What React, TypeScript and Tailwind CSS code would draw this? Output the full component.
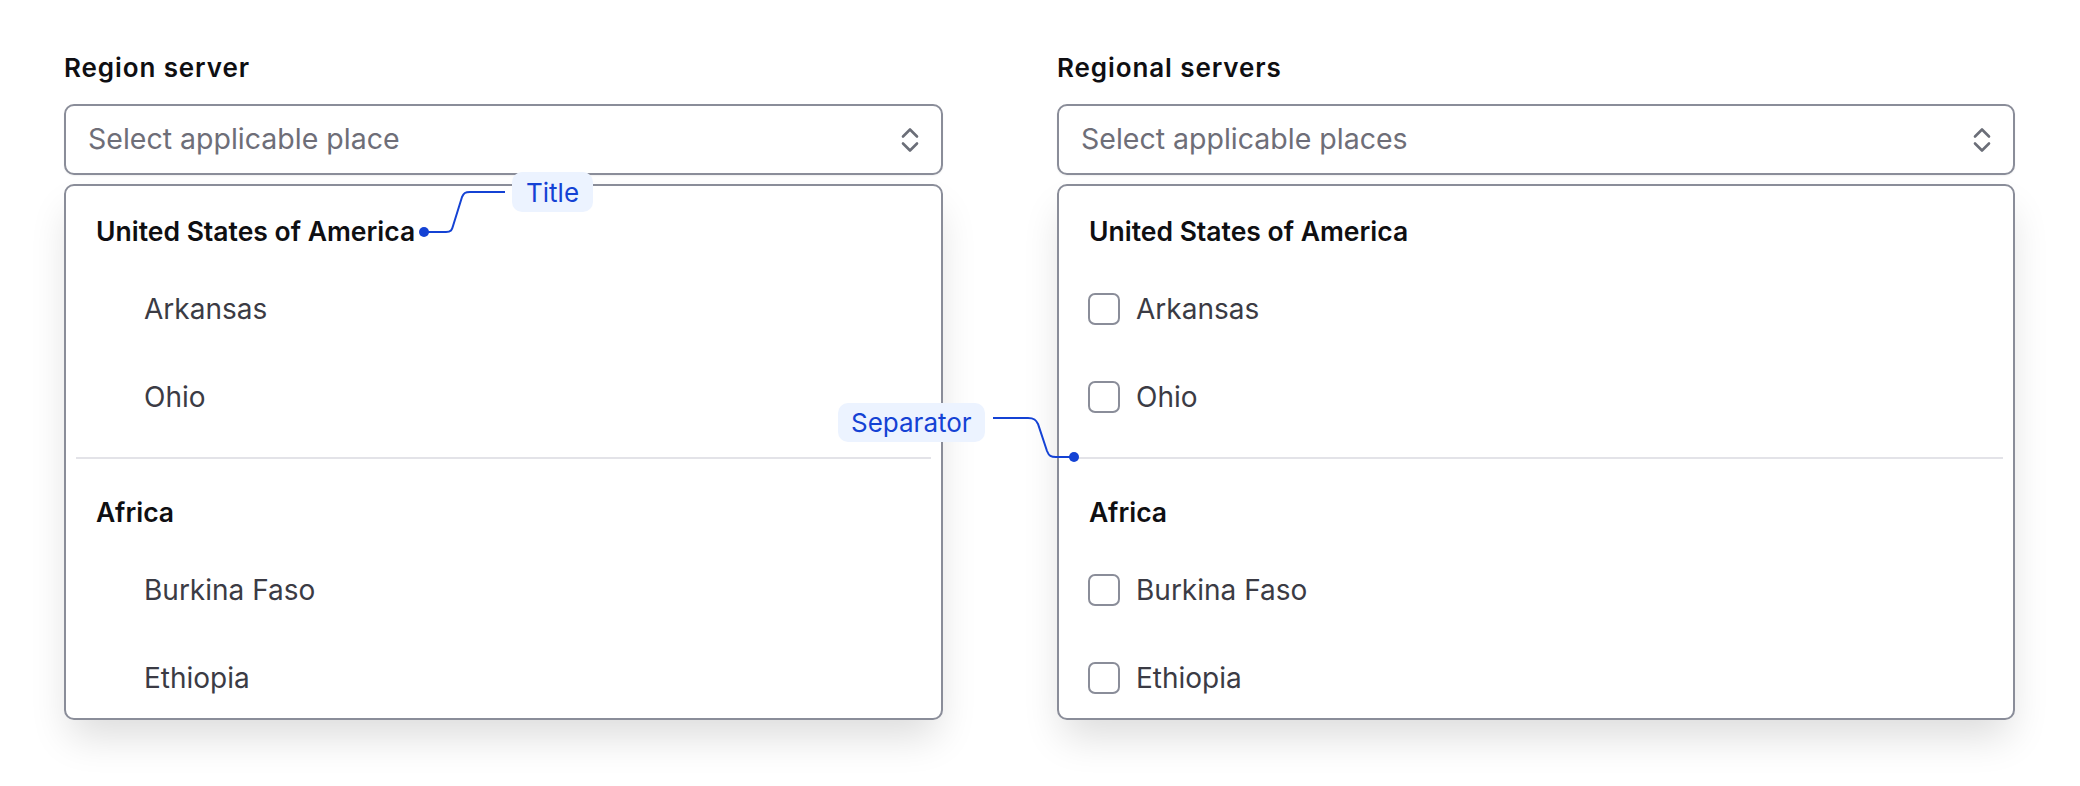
import React from "react";

type Group = { title: string; items: string[] };

const groups: Group[] = [
  { title: "United States of America", items: ["Arkansas", "Ohio"] },
  { title: "Africa", items: ["Burkina Faso", "Ethiopia"] },
];

const ChevronsUpDown = () => (
  <svg width="18" height="26" viewBox="0 0 18 26" fill="none" className="text-[#6b6e78]">
    <path d="M2 9.5 L9 2.5 L16 9.5" stroke="currentColor" strokeWidth="2.6" strokeLinecap="round" strokeLinejoin="round" />
    <path d="M2 16.5 L9 23.5 L16 16.5" stroke="currentColor" strokeWidth="2.6" strokeLinecap="round" strokeLinejoin="round" />
  </svg>
);

interface SelectColumnProps {
  label: string;
  placeholder: string;
  withCheckbox?: boolean;
}

const SelectColumn: React.FC<SelectColumnProps> = ({ label, placeholder, withCheckbox }) => {
  return (
    <div className="flex flex-col">
      <label className="text-[26px] leading-[32px] tracking-[0.9px] font-semibold text-[#0f0f12] mb-5">{label}</label>
      {/* Trigger */}
      <button
        type="button"
        className="h-[71px] w-full flex items-center justify-between border-2 border-[#8a8d99] rounded-[10px] bg-white pl-[22px] pr-[22px] shadow-[0_1px_2px_rgba(0,0,0,0.06)]"
      >
        <span className="text-[28.5px] text-[#6e6e78]">{placeholder}</span>
        <ChevronsUpDown />
      </button>
      {/* Open list */}
      <div className="mt-[9px] h-[536px] overflow-hidden border-2 border-[#8a8d99] rounded-[10px] bg-white shadow-[0_22px_40px_-6px_rgba(0,0,0,0.14)]">
        {groups.map((group, gi) => (
          <div key={group.title}>
            {gi > 0 && <div className="mt-4 mb-2 mx-[10px] h-[2px] bg-[#e3e3e8]" />}
            <div className="pt-3">
              <div className="h-[67px] flex items-center pl-[30px] text-[26.5px] font-semibold text-[#0f0f12]">
                {group.title}
              </div>
              {group.items.map((item) => (
                <div
                  key={item}
                  className={`h-[88px] flex items-center text-[28px] text-[#3b3b44] ${
                    withCheckbox ? "pl-[29px] gap-4" : "pl-[78px]"
                  }`}
                >
                  {withCheckbox && (
                    <span className="w-[32px] h-[32px] shrink-0 border-2 border-[#8a8d99] rounded-[7px] bg-white" />
                  )}
                  <span>{item}</span>
                </div>
              ))}
            </div>
          </div>
        ))}
      </div>
    </div>
  );
};

export default function App() {
  return (
    <div
      className="relative w-[2080px] h-[786px] bg-white overflow-hidden"
      style={{ fontFamily: "Inter, 'Noto Sans', sans-serif" }}
    >
      <div className="grid grid-cols-[879px_958px] gap-[114px] pl-16 pt-[52px]">
        <SelectColumn label="Region server" placeholder="Select applicable place" />
        <SelectColumn label="Regional servers" placeholder="Select applicable places" withCheckbox />
      </div>

      {/* Annotation leader lines */}
      <svg className="absolute left-0 top-0 pointer-events-none" width="2080" height="786" fill="none">
        <path
          d="M424 232 H446 C451 232 452 230 453 226 L462 197 C464 193 465 192 470 192 H505"
          stroke="#1442d4"
          strokeWidth="2"
        />
        <circle cx="424" cy="232" r="5" fill="#1442d4" />
        <path
          d="M993 418 H1028 C1034 418 1036 420 1038 424 L1047 451 C1049 456 1051 457 1056 457 H1074"
          stroke="#1442d4"
          strokeWidth="2"
        />
        <circle cx="1074" cy="457" r="5" fill="#1442d4" />
      </svg>

      {/* Annotation pills */}
      <div className="absolute left-[512px] top-[172px] h-[40px] px-[14px] flex items-center rounded-[10px] bg-[#ecf3ff] text-[26px] text-[#1442d4]">
        Title
      </div>
      <div className="absolute left-[838px] top-[403px] h-[39px] px-[13px] flex items-center rounded-[10px] bg-[#ecf3ff] text-[26px] text-[#1442d4]">
        Separator
      </div>
    </div>
  );
}
